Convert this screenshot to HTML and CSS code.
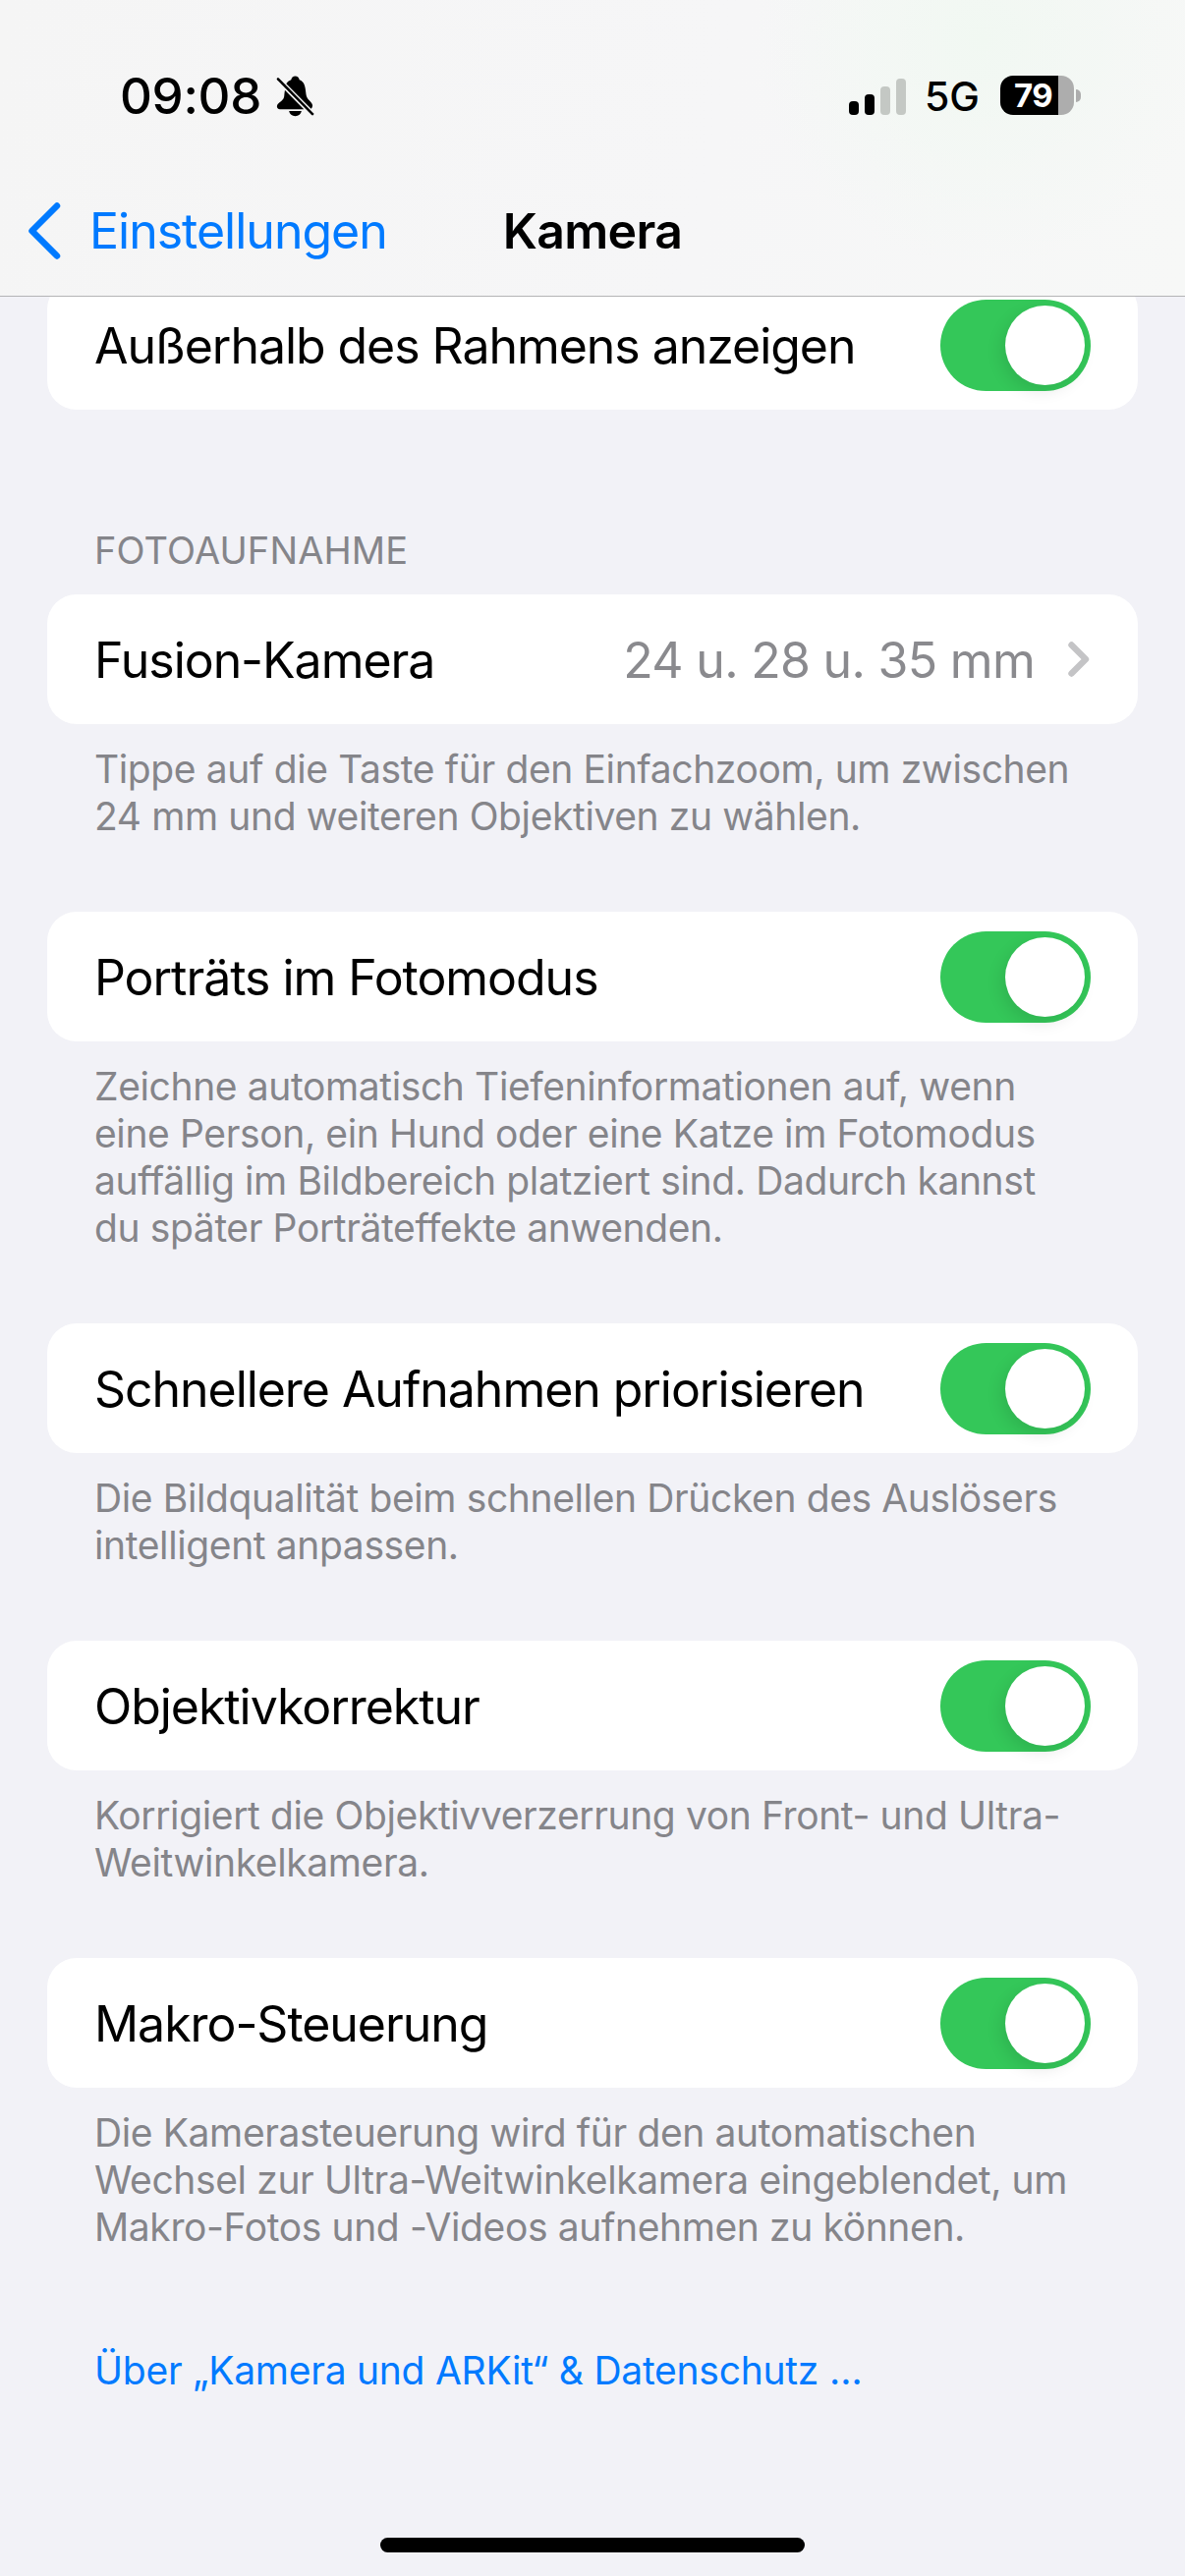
FILE: index.html
```html
<!DOCTYPE html>
<html lang="de">
<head>
<meta charset="utf-8">
<title>Kamera</title>
<link rel="stylesheet" href="styles.css">
</head>
<body>
<div class="screen">
  <header class="topbar">
    <div class="status">
      <div class="status-left">
        <span class="time">09:08</span>
        <svg class="bell" viewBox="0 0 40 42" aria-hidden="true">
          <path d="M20 0C17.700 0 16 1.700 15.700 3.800 13.500 4.600 11.700 6 10.600 8L36.500 34C38.500 32 38.600 29.500 36.500 27.300 33.500 24.300 31.800 23 31.200 18.500 30.600 11 29.500 5.500 24.300 3.800 24 1.700 22.300 0 20 0Z" fill="#000"/>
          <path d="M9.200 14.500C8.800 16.500 8.600 18.500 8.500 20.300 8.200 24.500 5.500 26 2.500 28.500 0 30.500.5 34.500 4 34.500H29Z" fill="#000"/>
          <path d="M13.500 36.500h13c-.5 3-3.200 5.300-6.500 5.300s-6-2.300-6.500-5.300z" fill="#000"/>
          <path d="M2 3l36 36.500" stroke="#000" stroke-width="2.600" stroke-linecap="round" fill="none"/>
        </svg>
      </div>
      <div class="status-right">
        <div class="signal">
          <span class="bar bar-1"></span>
          <span class="bar bar-2"></span>
          <span class="bar bar-3"></span>
          <span class="bar bar-4"></span>
        </div>
        <span class="network">5G</span>
        <div class="battery-wrap">
          <div class="battery"><span class="battery-level">79</span></div>
          <span class="battery-nub"></span>
        </div>
      </div>
    </div>
    <nav class="navbar">
      <div class="back">
        <svg class="back-icon" viewBox="0 0 36 60" aria-hidden="true">
          <path d="M31 4.500 5.500 30 31 55.500" fill="none" stroke="#007aff" stroke-width="6.500" stroke-linecap="round" stroke-linejoin="round"/>
        </svg>
        <span class="back-label">Einstellungen</span>
      </div>
      <h1 class="title">Kamera</h1>
    </nav>
  </header>

  <main class="content">
    <section class="card">
      <div class="row">
        <span class="row-label">Außerhalb des Rahmens anzeigen</span>
        <div class="toggle"><span class="knob"></span></div>
      </div>
    </section>

    <h2 class="section-head">FOTOAUFNAHME</h2>
    <section class="card">
      <div class="row">
        <span class="row-label">Fusion-Kamera</span>
        <div class="row-value">
          <span class="value-text">24 u. 28 u. 35 mm</span>
          <svg class="chevron" viewBox="0 0 24 36" aria-hidden="true">
            <path d="M4.500 3.500 19 18 4.500 32.500" fill="none" stroke="#c4c4c6" stroke-width="6.400" stroke-linecap="round" stroke-linejoin="round"/>
          </svg>
        </div>
      </div>
    </section>
    <p class="note">Tippe auf die Taste für den Einfachzoom, um zwischen<br>24 mm und weiteren Objektiven zu wählen.</p>

    <section class="card">
      <div class="row">
        <span class="row-label">Porträts im Fotomodus</span>
        <div class="toggle"><span class="knob"></span></div>
      </div>
    </section>
    <p class="note">Zeichne automatisch Tiefeninformationen auf, wenn<br>eine Person, ein Hund oder eine Katze im Fotomodus<br>auffällig im Bildbereich platziert sind. Dadurch kannst<br>du später Porträteffekte anwenden.</p>

    <section class="card">
      <div class="row">
        <span class="row-label">Schnellere Aufnahmen priorisieren</span>
        <div class="toggle"><span class="knob"></span></div>
      </div>
    </section>
    <p class="note">Die Bildqualität beim schnellen Drücken des Auslösers<br>intelligent anpassen.</p>

    <section class="card">
      <div class="row">
        <span class="row-label">Objektivkorrektur</span>
        <div class="toggle"><span class="knob"></span></div>
      </div>
    </section>
    <p class="note">Korrigiert die Objektivverzerrung von Front- und Ultra-<br>Weitwinkelkamera.</p>

    <section class="card">
      <div class="row">
        <span class="row-label">Makro-Steuerung</span>
        <div class="toggle"><span class="knob"></span></div>
      </div>
    </section>
    <p class="note">Die Kamerasteuerung wird für den automatischen<br>Wechsel zur Ultra-Weitwinkelkamera eingeblendet, um<br>Makro-Fotos und -Videos aufnehmen zu können.</p>

    <a class="link">Über „Kamera und ARKit“ &amp; Datenschutz …</a>
  </main>
  <div class="home-indicator"></div>
</div>
</body>
</html>
```

FILE: styles.css
```css
* { box-sizing: border-box; }

html, body {
  margin: 0;
  padding: 0;
}

body {
  background: #f2f2f7;
  font-family: Inter, "Liberation Sans", sans-serif;
  color: #000;
}

.screen {
  width: 1206px;
  height: 2622px;
  display: flex;
  flex-direction: column;
  overflow: hidden;
  position: relative;
  background: #f2f2f7;
}

.topbar {
  position: relative;
  z-index: 2;
  height: 302px;
  flex: none;
  border-bottom: 1px solid #b4b4b6;
  background:
    radial-gradient(circle at 1000px 40px, #f1f8f2 0, rgba(241, 248, 242, 0) 230px),
    linear-gradient(100deg, #f5f5f5, #f6f6f7 60%, #f7f8f7);
}

.status {
  height: 196px;
  padding: 77px 106px 0 122px;
  display: flex;
  justify-content: space-between;
  align-items: flex-start;
}

.status-left {
  display: flex;
  align-items: center;
  gap: 15px;
  height: 42px;
}

.time {
  font-size: 51px;
  font-weight: 550;
  line-height: 42px;
  letter-spacing: -0.3px;
}

.bell {
  width: 39px;
  height: 42px;
  display: block;
}

.status-right {
  display: flex;
  align-items: center;
  height: 40px;
}

.signal {
  display: flex;
  align-items: flex-end;
  gap: 6px;
  height: 37px;
  margin-top: 2px;
}

.bar {
  width: 10px;
  border-radius: 4px;
  background: #000;
}

.bar-1 { height: 14px; }
.bar-2 { height: 21px; }
.bar-3 { height: 29px; background: #c4c8c4; }
.bar-4 { height: 37px; background: #c4c8c4; }

.network {
  font-size: 41px;
  font-weight: 500;
  line-height: 40px;
  margin-left: 19px;
  margin-top: 2px;
}

.battery-wrap {
  display: flex;
  align-items: center;
  margin-left: 21px;
}

.battery {
  width: 75px;
  height: 40px;
  border-radius: 13px;
  background: linear-gradient(to right, #000 59px, #adadad 59px);
  display: flex;
  align-items: center;
  padding-left: 14px;
}

.battery-level {
  color: #fff;
  font-size: 33px;
  font-weight: 700;
  line-height: 40px;
  letter-spacing: -0.5px;
}

.battery-nub {
  width: 5px;
  height: 13px;
  margin-left: 2px;
  border-radius: 0 7px 7px 0;
  background: #adadad;
}

.navbar {
  position: relative;
  height: 78px;
  display: flex;
  align-items: center;
  justify-content: center;
}

.back {
  position: absolute;
  left: 27px;
  top: 0;
  height: 78px;
  display: flex;
  align-items: center;
  gap: 28px;
}

.back-icon {
  width: 36px;
  height: 60px;
  display: block;
}

.back-label {
  font-size: 50px;
  letter-spacing: -1px;
  color: #007aff;
  line-height: 60px;
}

.title {
  margin: 0;
  font-size: 50px;
  font-weight: 600;
  letter-spacing: -0.7px;
  line-height: 60px;
}

.content {
  margin-top: -17px;
  padding: 0 48px;
  display: flex;
  flex-direction: column;
}

.card {
  background: #fff;
  border-radius: 30px;
  flex: none;
}

.row {
  height: 132px;
  padding: 0 48px 0 48px;
  display: flex;
  align-items: center;
  justify-content: space-between;
}

.row-label {
  font-size: 50px;
  letter-spacing: -1.05px;
  line-height: 60px;
  padding-top: 2px;
}

.row-value {
  display: flex;
  align-items: center;
  gap: 33px;
}

.value-text {
  font-size: 50px;
  letter-spacing: -0.7px;
  line-height: 60px;
  padding-top: 2px;
  color: #8a8a8e;
}

.chevron {
  width: 24px;
  height: 36px;
  display: block;
}

.toggle {
  width: 153px;
  height: 93px;
  padding: 6px;
  border-radius: 47px;
  background: #34c759;
  display: flex;
  justify-content: flex-end;
}

.knob {
  width: 81px;
  height: 81px;
  border-radius: 50%;
  background: #fff;
  box-shadow: -4px 6px 16px rgba(0, 0, 0, 0.1);
}

.section-head {
  margin: 119px 0 21px;
  padding-left: 48px;
  font-size: 38px;
  font-weight: 400;
  letter-spacing: 0.1px;
  line-height: 48px;
  color: #85858a;
}

.note {
  margin: 22px 0 73px;
  padding-left: 48px;
  font-size: 39px;
  letter-spacing: -0.38px;
  line-height: 48px;
  color: #85858a;
}

.link {
  display: block;
  margin-top: 25px;
  padding-left: 48px;
  font-size: 39px;
  letter-spacing: -0.25px;
  line-height: 48px;
  color: #007aff;
}

.home-indicator {
  position: absolute;
  left: 387px;
  top: 2583px;
  width: 432px;
  height: 15px;
  border-radius: 8px;
  background: #000;
}
```
